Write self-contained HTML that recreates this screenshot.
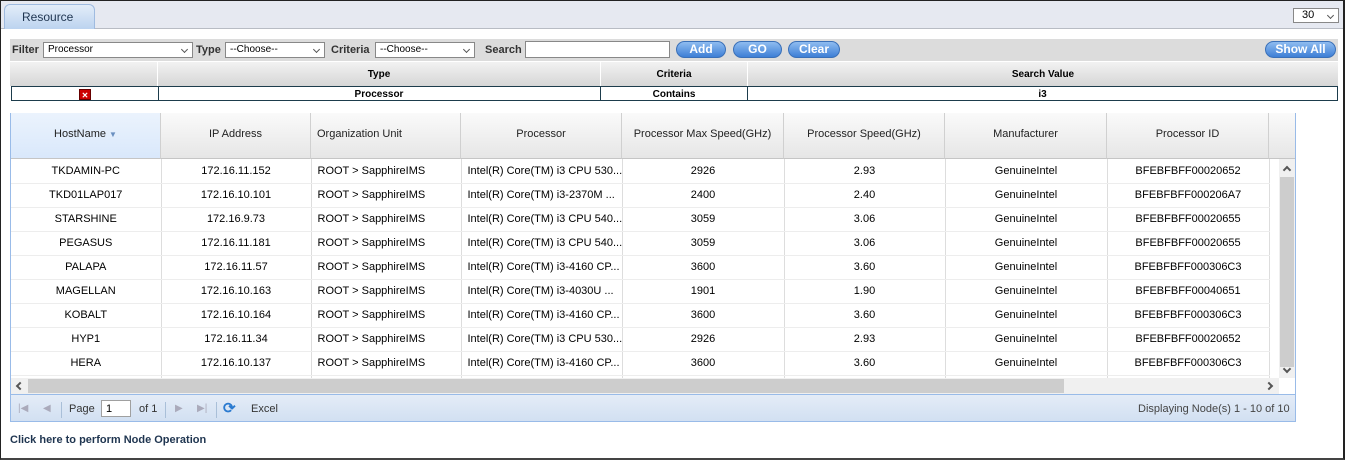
<!DOCTYPE html>
<html><head><style>
*{margin:0;padding:0;box-sizing:border-box}
body{width:1345px;height:460px;overflow:hidden;background:#fff;font-family:"Liberation Sans",Arial,sans-serif;font-size:11px;color:#000;position:relative}
.a{position:absolute}
.outer{left:0;top:0;width:1345px;height:460px;border:1px solid #222;border-right:2px solid #222;border-bottom:2px solid #444}
.topbar{left:1px;top:1px;width:1342px;height:28px;background:#e6e9f1;border-bottom:1px solid #b8bcc4}
.tab{left:4px;top:4px;width:91px;height:25px;border:1px solid #9fbbe0;border-bottom:none;border-radius:6px 6px 0 0;background:linear-gradient(#e3edf9,#bcd3ef);font-size:12px;color:#1f3550;padding:5px 0 0 17px}
.sel{background:#fff;border:1px solid #888;font-size:10px;padding:1px 4px}
.dd:after{content:"";position:absolute;right:5px;top:4px;width:4px;height:4px;border-right:1px solid #555;border-bottom:1px solid #555;transform:rotate(45deg)}
.fbar{left:10px;top:39px;width:1328px;height:22px;background:#dcdcdc}
.lbl{font-weight:bold;font-size:11px;color:#333;top:44px}
.btn{top:41px;height:17px;border-radius:9px;background:linear-gradient(#8fbcf0,#3e7fd6);border:1px solid #3a70b8;color:#fff;font-weight:bold;font-size:12px;text-align:center;line-height:15px}
.ch{top:62px;height:24px;background:linear-gradient(#f2f2f2,#d6d6d6);border-right:1px solid #fff;font-weight:bold;font-size:10px;text-align:center;line-height:26px}
.cr{top:86px;height:15px;border:1px solid #1d3c4c;font-weight:bold;font-size:10px;text-align:center;line-height:15px}
.grid{left:10px;top:113px;width:1286px;height:309px;border:1px solid #99bbe8}
.gh{top:113px;height:46px;background:linear-gradient(#fafafa,#e6e6e6);border-right:1px solid #d0d0d0;border-bottom:1px solid #c5c5c5;text-align:center;line-height:42px;font-size:11px;color:#222}
.c{height:24px;border-right:1px solid #ddd;border-bottom:1px solid #ededed;text-align:center;line-height:22px;font-size:11px;white-space:nowrap;overflow:hidden}
.l{text-align:left;padding-left:6px}
.pb{left:11px;top:394px;width:1284px;height:27px;background:linear-gradient(#e4ecf7,#d2e0f2);border-top:1px solid #99bbe8}
.chev{position:absolute;width:6px;height:6px;border-right:2px solid #555;border-bottom:2px solid #555}
</style></head><body>
<div class="a outer"></div>
<div class="a topbar"></div>
<div class="a tab">Resource</div>
<div class="a sel dd" style="left:1293px;top:8px;width:46px;height:15px;font-size:11px;padding-left:8px;line-height:11px">30</div>

<div class="a fbar"></div>
<div class="a lbl" style="left:12px">Filter</div>
<div class="a sel dd" style="left:43px;top:42px;width:150px;height:16px">Processor</div>
<div class="a lbl" style="left:196px">Type</div>
<div class="a sel dd" style="left:225px;top:42px;width:100px;height:16px">--Choose--</div>
<div class="a lbl" style="left:331px">Criteria</div>
<div class="a sel dd" style="left:375px;top:42px;width:100px;height:16px">--Choose--</div>
<div class="a lbl" style="left:485px">Search</div>
<div class="a sel" style="left:525px;top:41px;width:145px;height:17px"></div>
<div class="a btn" style="left:676px;width:50px">Add</div>
<div class="a btn" style="left:733px;width:49px">GO</div>
<div class="a btn" style="left:788px;width:52px">Clear</div>
<div class="a btn" style="left:1265px;width:71px">Show All</div>

<div class="a ch" style="left:10px;width:148px"></div>
<div class="a ch" style="left:158px;width:443px">Type</div>
<div class="a ch" style="left:601px;width:147px">Criteria</div>
<div class="a ch" style="left:748px;width:590px;border-right:none">Search Value</div>
<div class="a cr" style="left:11px;width:148px"><span style="display:inline-block;width:12px;height:11px;background:#c00;color:#fff;font-size:8px;line-height:11px;vertical-align:middle;border:1px solid #600">✕</span></div>
<div class="a cr" style="left:158px;width:443px;border-left:none">Processor</div>
<div class="a cr" style="left:600px;width:148px;border-left:1px solid #1d3c4c">Contains</div>
<div class="a cr" style="left:747px;width:591px">i3</div>

<div class="a grid"></div>
<div class="a gh" style="left:11px;width:150px;background:linear-gradient(#ebf3fd,#d9e8fb)">HostName <span style="color:#6a8fc0;font-size:8px">▼</span></div>
<div class="a gh" style="left:161px;width:150px">IP Address</div>
<div class="a gh" style="left:311px;width:150px;text-align:left;padding-left:6px">Organization Unit</div>
<div class="a gh" style="left:461px;width:161px">Processor</div>
<div class="a gh" style="left:622px;width:162px">Processor Max Speed(GHz)</div>
<div class="a gh" style="left:784px;width:161px">Processor Speed(GHz)</div>
<div class="a gh" style="left:945px;width:162px">Manufacturer</div>
<div class="a gh" style="left:1107px;width:162px">Processor ID</div>
<div class="a gh" style="left:1269px;width:26px;border-right:none"></div>

<div class="a" style="left:11px;top:159px;width:1268px;height:219px;overflow:hidden">
<table style="border-collapse:collapse;table-layout:fixed;width:1258px">
<colgroup><col style="width:150px"><col style="width:150px"><col style="width:150px"><col style="width:161px"><col style="width:162px"><col style="width:161px"><col style="width:162px"><col style="width:162px"></colgroup>
<tbody id="tb"></tbody></table>
</div>
<script>
var d=[["TKDAMIN-PC","172.16.11.152","Intel(R) Core(TM) i3 CPU 530...","2926","2.93","BFEBFBFF00020652"],
["TKD01LAP017","172.16.10.101","Intel(R) Core(TM) i3-2370M ...","2400","2.40","BFEBFBFF000206A7"],
["STARSHINE","172.16.9.73","Intel(R) Core(TM) i3 CPU 540...","3059","3.06","BFEBFBFF00020655"],
["PEGASUS","172.16.11.181","Intel(R) Core(TM) i3 CPU 540...","3059","3.06","BFEBFBFF00020655"],
["PALAPA","172.16.11.57","Intel(R) Core(TM) i3-4160 CP...","3600","3.60","BFEBFBFF000306C3"],
["MAGELLAN","172.16.10.163","Intel(R) Core(TM) i3-4030U ...","1901","1.90","BFEBFBFF00040651"],
["KOBALT","172.16.10.164","Intel(R) Core(TM) i3-4160 CP...","3600","3.60","BFEBFBFF000306C3"],
["HYP1","172.16.11.34","Intel(R) Core(TM) i3 CPU 530...","2926","2.93","BFEBFBFF00020652"],
["HERA","172.16.10.137","Intel(R) Core(TM) i3-4160 CP...","3600","3.60","BFEBFBFF000306C3"],
["X","172.16.10.1","Intel(R) Core(TM) i3","3600","3.60","BFEBFBFF000306C3"]];
var h="";d.forEach(function(r){h+="<tr><td class='c'>"+r[0]+"</td><td class='c'>"+r[1]+"</td><td class='c l'>ROOT &gt; SapphireIMS</td><td class='c l'>"+r[2]+"</td><td class='c'>"+r[3]+"</td><td class='c'>"+r[4]+"</td><td class='c'>GenuineIntel</td><td class='c'>"+r[5]+"</td></tr>"});
document.getElementById("tb").innerHTML=h;
</script>
<div class="a" style="left:1279px;top:159px;width:16px;height:219px;background:#f0f0f0"></div>
<div class="a" style="left:1280px;top:177px;width:14px;height:190px;background:#cdcdcd"></div>
<div class="chev" style="left:1284px;top:167px;transform:rotate(-135deg)"></div>
<div class="chev" style="left:1284px;top:366px;transform:rotate(45deg)"></div>
<div class="a" style="left:11px;top:378px;width:1268px;height:16px;background:#f0f0f0"></div>
<div class="a" style="left:28px;top:379px;width:1036px;height:14px;background:#cdcdcd"></div>
<div class="chev" style="left:17px;top:383px;transform:rotate(135deg)"></div>
<div class="chev" style="left:1266px;top:383px;transform:rotate(-45deg)"></div>

<div class="a pb"></div>
<div class="a" style="left:18px;top:403px;color:#aab;font-size:10px">|◀</div>
<div class="a" style="left:43px;top:403px;color:#aab;font-size:10px">◀</div>
<div class="a" style="left:61px;top:402px;width:1px;height:16px;background:#a9bfd8"></div>
<div class="a" style="left:69px;top:403px;color:#333">Page</div>
<div class="a" style="left:101px;top:400px;width:30px;height:17px;background:#fff;border:1px solid #a0a0a0;padding:2px 4px">1</div>
<div class="a" style="left:139px;top:403px;color:#333">of 1</div>
<div class="a" style="left:165px;top:402px;width:1px;height:16px;background:#a9bfd8"></div>
<div class="a" style="left:175px;top:403px;color:#aab;font-size:10px">▶</div>
<div class="a" style="left:197px;top:403px;color:#aab;font-size:10px">▶|</div>
<div class="a" style="left:216px;top:402px;width:1px;height:16px;background:#a9bfd8"></div>
<div class="a" style="left:223px;top:399px;color:#2a7ad0;font-size:15px;font-weight:bold">&#10227;</div>
<div class="a" style="left:251px;top:403px;color:#333">Excel</div>
<div class="a" style="left:1138px;top:403px;color:#444">Displaying Node(s) 1 - 10 of 10</div>

<div class="a" style="left:10px;top:434px;font-weight:bold;color:#1f3550;font-size:11px">Click here to perform Node Operation</div>
</body></html>
